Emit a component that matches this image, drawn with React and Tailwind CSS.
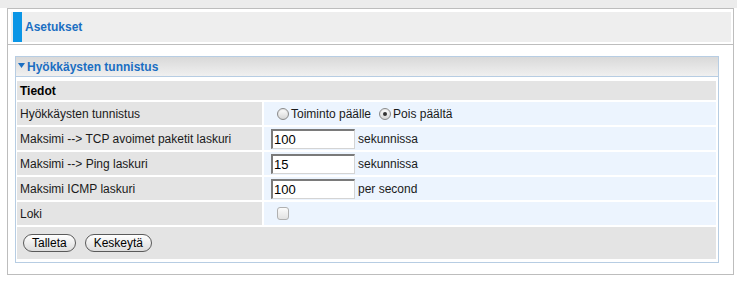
import React from 'react';

const rows = [
  { label: 'Maksimi --> TCP avoimet paketit laskuri', value: '100', unit: 'sekunnissa' },
  { label: 'Maksimi --> Ping laskuri', value: '15', unit: 'sekunnissa' },
  { label: 'Maksimi ICMP laskuri', value: '100', unit: 'per second' },
];

const Radio = ({ checked, label }) => (
  <label className="flex items-center">
    <span className="flex items-center justify-center w-[12px] h-[12px] rounded-full border border-[#8a8a8a] bg-gradient-to-b from-white to-[#d6d6d6] shadow-[inset_0_1px_1px_rgba(0,0,0,0.1)]">
      {checked && <span className="w-[4px] h-[4px] rounded-full bg-[#333]" />}
    </span>
    <span className="ml-[2px]">{label}</span>
  </label>
);

const Row = ({ label, children }) => (
  <div className="flex gap-[2px] h-[23px]">
    <div className="w-[245px] bg-[#e4e4e4] flex items-center pl-[3px]">{label}</div>
    <div className="flex-1 bg-[#ecf4fe] flex items-center">{children}</div>
  </div>
);

const Pill = ({ children }) => (
  <button
    type="button"
    className="h-[18px] px-[8px] rounded-full border border-[#5a5a5a] bg-gradient-to-b from-white to-[#dcdcdc] text-[12px] leading-none text-black"
  >
    {children}
  </button>
);

const App = () => {
  return (
    <div className="w-[737px] h-[292px] bg-white text-[12px] text-[#1a1a1a] font-['Liberation_Sans',Arial,sans-serif]">
      <div className="h-[8px] bg-[#ececec]" />
      <div className="ml-[7px] w-[727px] border border-[#bdbdbd] pb-[11px]">
        <div className="pt-[3px] pb-[2px] pl-[3px] pr-[2px] border-b border-[#bdbdbd]">
          <div className="h-[30px] bg-[#eeeeee] flex items-center pl-[2px]">
            <div className="w-[9px] h-full bg-[#0b96e6]" />
            <span className="ml-[3px] font-bold text-[#1b6ec2]">Asetukset</span>
          </div>
        </div>

        <div className="mt-[11px] ml-[7px] w-[704px] border border-[#b7cde3]">
          <div className="h-[20px] border-b border-[#b7cde3] bg-gradient-to-b from-[#d9d9d9] to-[#f0f0f0] flex items-center pl-[2px]">
            <svg width="7" height="5" viewBox="0 0 7 5" className="mt-[-2px]">
              <polygon points="0,0 7,0 3.5,5" fill="#1b6ec2" />
            </svg>
            <span className="ml-[2px] font-bold text-[#1b6ec2]">Hyökkäysten tunnistus</span>
          </div>

          <div className="pt-[4px] pb-[3px] pl-[1px] pr-[2px] flex flex-col gap-[2px]">
            <div className="h-[19px] bg-[#e4e4e4] flex items-center pl-[3px] font-bold text-black">Tiedot</div>

            <Row label="Hyökkäysten tunnistus">
              <div className="flex items-center gap-[8px] pl-[13px]">
                <Radio label="Toiminto päälle" />
                <Radio checked label="Pois päältä" />
              </div>
            </Row>

            {rows.map((row) => (
              <Row key={row.label} label={row.label}>
                <div className="flex items-center pl-[7px]">
                  <input
                    type="text"
                    value={row.value}
                    readOnly
                    className="w-[84px] h-[20px] bg-white border-t-2 border-l-2 border-r border-b border-t-[#7a7a7a] border-l-[#7a7a7a] border-r-[#d4d4d4] border-b-[#d4d4d4] pl-[1px] text-[13px] text-black outline-none"
                  />
                  <span className="ml-[3px]">{row.unit}</span>
                </div>
              </Row>
            ))}

            <Row label="Loki">
              <div className="pl-[13px] flex items-center">
                <span className="w-[12px] h-[13px] rounded-[3px] border border-[#b0b0b0] bg-gradient-to-b from-[#fbfbfb] to-[#e2e2e2]" />
              </div>
            </Row>

            <div className="h-[32px] bg-[#e4e4e4] flex items-center gap-[9px] pl-[6px]">
              <Pill>Talleta</Pill>
              <Pill>Keskeytä</Pill>
            </div>
          </div>
        </div>
      </div>
    </div>
  );
};

export default App;
